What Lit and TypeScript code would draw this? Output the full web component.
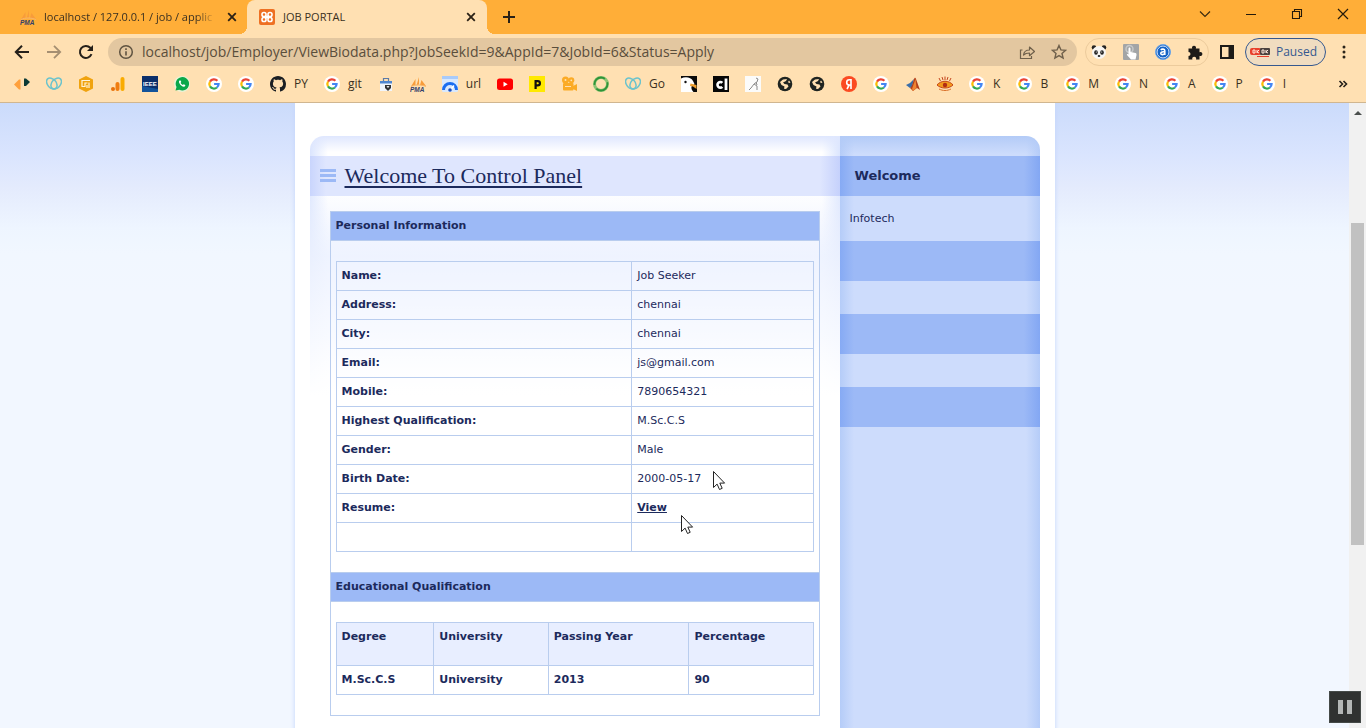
import { LitElement, html, css, svg, TemplateResult } from "lit";
import { customElement } from "lit/decorators.js";

type Glyph = TemplateResult;

const icon = (body: unknown, box = 16, size = 16): Glyph =>
  html`<svg width=${size} height=${size} viewBox="0 0 ${box} ${box}" fill="none" aria-hidden="true">${body}</svg>`;

const google = icon(svg`
  <circle cx="8" cy="8" r="8" fill="#fff"/>
  <g stroke-width="2.200">
    <path d="M4 5.600A4.600 4.600 0 0 1 11.400 4.800" stroke="#ea4335"/>
    <path d="M4 5.600A4.700 4.700 0 0 0 4 10.400" stroke="#fbbc05"/>
    <path d="M4 10.400A4.600 4.600 0 0 0 10.900 11.500" stroke="#34a853"/>
    <path d="M10.900 11.500A4.700 4.700 0 0 0 12.600 8H8.100" stroke="#4285f4"/>
  </g>`);

const pma = icon(svg`
  <path d="M1 10.500L5.500 3v6zM6.500 9.500L9 1v7.500zM10 9l1.500-5L16 10z" fill="#f89c3a"/>
  <path d="M1 10.500c4-2 10-2 15 0" stroke="#f7b56a"/>
  <text x="0" y="15.500" font-family="Liberation Sans" font-size="6.500" font-weight="bold" font-style="italic" fill="#33416b">PMA</text>`);

const godaddy = icon(svg`
  <g stroke="#6cc3cc" stroke-width="1.500">
    <ellipse cx="5.800" cy="7.500" rx="4.300" ry="6.300" transform="rotate(-42 5.800 7.500)"/>
    <ellipse cx="10.200" cy="7.500" rx="4.300" ry="6.300" transform="rotate(42 10.200 7.500)"/>
  </g>`);

const globe = icon(svg`
  <circle cx="8" cy="8" r="7.300" fill="#1f2421"/>
  <path d="M3 6l3-2.500 4-.5-1 2-3 1.500 1.500 1.500 3 .5 1 2-2.500 2.500-2-.3.500-2.200-3-1.500z" fill="#ffe0b2"/>
  <path d="M12 4.500l1.500 2-1.500.5-1-1z" fill="#ffe0b2"/>`);

const xampp = icon(svg`
  <rect width="16" height="16" rx="2" fill="#ee7023"/>
  <g stroke="#fff" stroke-width="1.600">
    <rect x="3" y="3.500" width="4" height="4" rx="1.800"/><rect x="9" y="3.500" width="4" height="4" rx="1.800"/>
    <rect x="3" y="8.500" width="4" height="4" rx="1.800"/><rect x="9" y="8.500" width="4" height="4" rx="1.800"/>
  </g>
  <path d="M6 6.500h4v3H6z" fill="#fff"/>`);

const glyphs: Record<string, Glyph> = {
  google, pma, godaddy, globe, xampp,
  diamonds: icon(svg`<path d="M0 8.500L5 3.500h1.500v10H5z" fill="#ffa03c"/><path d="M10 2.500h2L16 6l-4 4h-2z" fill="#0d3b36"/>`),
  hex: icon(svg`<path d="M8 0l7 3.500v9L8 16l-7-3.500v-9z" fill="#f0a30f"/><path d="M12 4.500H4v6h3v-3.500h2.500M9 12V9M11 12V6.500" stroke="#fff3d6" stroke-width="1.200"/>`),
  bars: icon(svg`<rect x="10.500" y="1" width="4" height="14" rx="2" fill="#f9ab00"/><rect x="5.500" y="6" width="4" height="9" rx="2" fill="#f07d10"/><circle cx="3" cy="13" r="2" fill="#e8710a"/>`),
  ieee: icon(svg`<rect width="16" height="16" fill="#0b2f6b"/><path d="M0 16V10l16 3v3z" fill="#12539b"/><text x="1" y="10" font-family="Liberation Sans" font-size="6" font-weight="bold" fill="#fff">IEEE</text>`),
  whatsapp: icon(svg`<circle cx="8" cy="8" r="8" fill="#e9f3d8"/><path d="M1.500 14.500l1-3.500A6.700 6.700 0 1 1 5.300 13.700z" fill="#0aa84a"/><path d="M5.500 4.500c-1.300 1 0 3.600 1.700 5 1.700 1.400 3.300 1.800 4 .5l.1-.9-1.600-.9-.9.800c-1-.4-1.900-1.300-2.200-2.200l.7-.8-.7-1.600z" fill="#fff"/>`),
  github: icon(svg`<path fill="#1b1f23" d="M8 0C3.580 0 0 3.580 0 8c0 3.540 2.290 6.530 5.470 7.590.4.070.55-.17.55-.38 0-.19-.01-.82-.01-1.490-2.010.37-2.530-.49-2.690-.94-.09-.23-.48-.94-.82-1.130-.28-.15-.68-.52-.01-.53.630-.01 1.080.58 1.230.82.720 1.210 1.870.87 2.330.66.070-.52.280-.87.510-1.070-1.780-.2-3.640-.89-3.640-3.950 0-.87.310-1.590.82-2.150-.08-.2-.36-1.020.08-2.120 0 0 .67-.21 2.200.82.640-.18 1.320-.27 2-.27s1.360.09 2 .27c1.530-1.040 2.200-.82 2.200-.82.440 1.100.16 1.920.08 2.120.510.56.820 1.270.82 2.150 0 3.070-1.870 3.750-3.650 3.950.29.250.54.730.54 1.480 0 1.070-.01 1.930-.01 2.200 0 .21.150.46.550.38A8 8 0 0 0 16 8c0-4.420-3.580-8-8-8z"/>`),
  box: icon(svg`<path d="M5.500 5V2.500h5V5" stroke="#5b7ba8" stroke-width="1.200"/><rect x="2" y="5" width="12" height="10" fill="#f1f5fb"/><path d="M2 5h12v2.500H2z" fill="#4f86cf"/><path d="M7 9h6v3l-3 3-3-3z" fill="#333"/><path d="M9 10l1 1.500L11 10" stroke="#fff"/>`),
  gauge: icon(svg`<rect width="16" height="16" rx="1.500" fill="#d8e8fd"/><path d="M0 0h16v3H0z" fill="#a9cbfa"/><path d="M1.500 14a6.500 6.500 0 0 1 13 0" stroke="#1a6df0" stroke-width="3"/><path d="M8 14.500l4-5" stroke="#fff" stroke-width="1.500"/><circle cx="8" cy="14" r="1.800" fill="#1a4fbf"/>`),
  youtube: icon(svg`<rect y="2.500" width="16" height="11.500" rx="2.500" fill="#f00"/><path d="M6.500 5.800v4.900L10.700 8.200z" fill="#fff"/>`),
  pbox: icon(svg`<rect width="16" height="16" fill="#ffe900"/><path d="M6.600 13V5.200h2.200a2.100 2.100 0 0 1 0 4.200H7" stroke="#111" stroke-width="2.200"/>`),
  camera: icon(svg`<g fill="#fbab26"><circle cx="4.500" cy="4" r="3.500"/><circle cx="10.300" cy="4.300" r="3"/><rect x="2" y="7" width="10.500" height="7.500" rx="1"/><path d="M12 10l4-2v7l-4-2z"/></g><g fill="#ffe0b2"><circle cx="4.500" cy="4" r="1"/><circle cx="10.300" cy="4.300" r=".9"/><path d="M4 10h6v1H4z"/></g>`),
  ring: icon(svg`<circle cx="8" cy="8" r="6.500" stroke="#8cc474" stroke-width="3"/><circle cx="8" cy="8" r="6.500" stroke="#2f9339" stroke-width="1.800" stroke-dasharray="15 4"/>`),
  bird: icon(svg`<rect width="16" height="16" fill="#0b0b0b"/><path d="M0 2.500C4 .5 10 1 12 5l1.500 3-3 2.500c-.5 2 .5 4 2 5.500H0z" fill="#fff"/><path d="M9.500 7.500l6 1.500v4L12 10.500 9 10z" fill="#f0a030"/><circle cx="4.500" cy="6" r="1.200" fill="#111"/>`),
  cl: icon(svg`<rect width="16" height="16" fill="#060606"/><path d="M9.300 6.900A2.800 2.800 0 1 0 9.300 10.800" stroke="#fff" stroke-width="2.600"/><path d="M13 2.500v11.500" stroke="#fff" stroke-width="2.800"/>`),
  figure: icon(svg`<rect width="16" height="16" fill="#fbfbfa"/><path d="M11 2l2 1-1 3-3 2 3 2v4M9 8l-3 4-2 2M11 6l1 3" stroke="#8a8a8a"/>`),
  yandex: icon(svg`<circle cx="8" cy="8" r="8" fill="#fb4a22"/><path d="M10 13V3.800H8.300a2.500 2.500 0 0 0 0 5.200H10M8.200 9l-2.200 4" stroke="#fff" stroke-width="1.600"/>`),
  matlab: icon(svg`<path d="M1 9l4-2 4-4-2 8-2 1z" fill="#3b6ea8"/><path d="M9 3c1-2 1.500-1.500 2 0l4 11-3-2-4 3-3-3C7 11 8 6 9 3z" fill="#b4401c"/><path d="M10.500 3l1 9L8 15l-1-2z" fill="#ef8532"/>`),
  eye: icon(svg`<g stroke="#c4451d"><path d="M2 2l1.500 3M5 1l1 3M8 .5V4M11 1l-1 3M14 2l-1.500 3"/></g><path d="M0 9c4-5 12-5 16 0-4 4-12 4-16 0z" fill="#f29b1d" stroke="#c4451d"/><circle cx="8" cy="9" r="2.200" fill="#b32e15"/><path d="M2 13c4 2 8 2 12 0" stroke="#d9702a"/>`),
  panda: icon(svg`<g fill="#222"><circle cx="3" cy="3.500" r="2.300"/><circle cx="13" cy="3.500" r="2.300"/></g><ellipse cx="8" cy="8.500" rx="7" ry="6.500" fill="#f7f5f2"/><g fill="#222"><ellipse cx="5" cy="8.500" rx="1.800" ry="2.200"/><ellipse cx="11" cy="8.500" rx="1.800" ry="2.200"/><ellipse cx="8" cy="12" rx="1.300" ry=".9"/></g><circle cx="5.300" cy="8" r=".6" fill="#fff"/><circle cx="10.700" cy="8" r=".6" fill="#fff"/>`),
  hand: icon(svg`<rect width="16" height="16" rx="1" fill="#a3a5a6"/><circle cx="6.500" cy="5" r="3.500" stroke="#c6c8c9" stroke-width="1.500"/><path d="M5.500 4.500c0-1.500 2-1.500 2 0V8l5 1c1 .3 1 1 1 2l-1 4.500H8L4 11c-.5-1 .5-1.500 1.500-.5z" fill="#fff"/>`),
  ablue: icon(svg`<circle cx="8" cy="8" r="7.500" fill="#1462c4" stroke="#6ba6e8"/><circle cx="8" cy="8" r="6" stroke="#dbeaff"/><path d="M5.800 6c1-1.300 4-1.200 4 .8V11M9.800 7.800c-2-.3-4 .2-4 1.500 0 2 3.500 1.500 4 0" stroke="#fff" stroke-width="1.600"/>`),
  puzzle: icon(svg`<path d="M1.500 4.500h3.700a2 2 0 1 1 3.600 0h3.700v3.700a2 2 0 1 1 0 3.600V15.500H9a2 2 0 1 0-3.600 0H1.500V12a2 2 0 1 0 0-4z" fill="#1d1b18"/>`),
  panel: icon(svg`<rect x="2" y="2" width="12" height="12" stroke="#1d1b18" stroke-width="2"/><path d="M9.500 2H14v12H9.500z" fill="#1d1b18"/>`),
  dots: icon(svg`<g fill="#2b241a"><circle cx="8" cy="3" r="1.500"/><circle cx="8" cy="8" r="1.500"/><circle cx="8" cy="13" r="1.500"/></g>`),
  back: icon(svg`<path d="M15 8H2.500M8 1.800L1.800 8 8 14.200" stroke="#25201a" stroke-width="2"/>`),
  forward: icon(svg`<path d="M1 8h12.500M8 1.800L14.200 8 8 14.200" stroke="#a58f72" stroke-width="1.800"/>`),
  reload: icon(svg`<path d="M13.500 10.200A6 6 0 1 1 12.300 3.800L14 5.500" stroke="#25201a" stroke-width="2"/><path d="M15 1v6H9z" fill="#25201a"/>`),
  info: icon(svg`<circle cx="8" cy="8" r="6.300" stroke="#5f5341" stroke-width="1.500"/><path d="M8 7.200v4.300M8 4.300V6" stroke="#5f5341" stroke-width="1.600"/>`),
  share: icon(svg`<path d="M3.500 6H1.500v8.500h11V12" stroke="#6f604b" stroke-width="1.200"/><path d="M4.500 11c.5-3.500 2.500-5 6-5V3l5 4.500-5 4.200V9c-2.500 0-4.500.5-6 2z" stroke="#6f604b" stroke-width="1.200" stroke-linejoin="round"/>`),
  star: icon(svg`<path d="M8 1.500l1.900 4.400 4.700.4-3.600 3.100 1.100 4.700L8 11.600l-4.100 2.500L5 9.400 1.400 6.300l4.700-.4z" stroke="#6f604b" stroke-width="1.400"/>`),
  close: icon(svg`<path d="M4.200 4.200l7.600 7.600M11.800 4.200l-7.600 7.600" stroke="#2a2116" stroke-width="1.800"/>`),
  plus: icon(svg`<path d="M8 2v12M2 8h12" stroke="#2a2116" stroke-width="2"/>`),
  chevron: icon(svg`<path d="M3 5.500l5 5 5-5" stroke="#3a2a10" stroke-width="1.200"/>`),
  min: icon(svg`<path d="M3 8.500h10" stroke="#241a0a"/>`),
  max: icon(svg`<path d="M3.500 5.500h7v7h-7zM5.500 5.500v-2h7v7h-2" stroke="#241a0a" stroke-width="1.100"/>`),
  exit: icon(svg`<path d="M3 3l10 10M13 3L3 13" stroke="#241a0a" stroke-width="1.200"/>`),
  more: icon(svg`<path d="M4.500 5l3 3-3 3M8.500 5l3 3-3 3" stroke="#25201a" stroke-width="1.600"/>`),
};

const bookmarks: Array<[string, string, string]> = [
  ["diamonds", "", "Design"], ["godaddy", "", "Domains"], ["hex", "", "Statistics"], ["bars", "", "Analytics"],
  ["ieee", "", "IEEE"], ["whatsapp", "", "WhatsApp"], ["google", "", "Google"], ["google", "", "Google"],
  ["github", "PY", ""], ["google", "git", ""], ["box", "", "Store"], ["pma", "", "phpMyAdmin"],
  ["gauge", "url", ""], ["youtube", "", "YouTube"], ["pbox", "", "P"], ["camera", "", "Camera"],
  ["ring", "", "Ring"], ["godaddy", "Go", ""], ["bird", "", "Bird"], ["cl", "", "cl"], ["figure", "", "Figure"],
  ["globe", "", "Globe"], ["globe", "", "Globe"], ["yandex", "", "Yandex"], ["google", "", "Google"],
  ["matlab", "", "MATLAB"], ["eye", "", "Eye"], ["google", "K", ""], ["google", "B", ""], ["google", "M", ""],
  ["google", "N", ""], ["google", "A", ""], ["google", "P", ""], ["google", "I", ""],
];

@customElement("browser-chrome")
export class BrowserChrome extends LitElement {
  static styles = css`
    :host { display: block; font: 12px/16px "Open Sans", sans-serif; color: #3a3021; background: #ffe0b2; border-bottom: 1px solid #d0b690; }
    svg { display: block; flex: none; }
    button { border: 0; padding: 0; margin: 0; background: none; font: inherit; color: inherit; display: flex; align-items: center; }
    .strip { display: flex; align-items: center; height: 34px; background: #ffae38; }
    .tab { box-sizing: border-box; height: 34px; display: flex; align-items: center; gap: 8px; flex: 0 1 240px; min-width: 0; padding: 0 8px 0 12px; }
    .first { flex-basis: 247px; padding: 0 7px 0 20px; }
    .active { position: relative; background: #ffe0b2; border-radius: 8px 8px 0 0; }
    .active::before, .active::after { content: ""; position: absolute; bottom: 0; width: 8px; height: 8px; }
    .active::before { right: 100%; background: radial-gradient(circle at 0 0, transparent 8px, #ffe0b2 8px); }
    .active::after { left: 100%; background: radial-gradient(circle at 100% 0, transparent 8px, #ffe0b2 8px); }
    .title { flex: 1; min-width: 0; white-space: nowrap; font-size: 11px; }
    .fade { -webkit-mask-image: linear-gradient(to left, transparent, #000 20px); mask-image: linear-gradient(to left, transparent, #000 20px); }
    .new { margin: 0 auto 0 14px; }
    .window { display: flex; gap: 30px; padding-right: 15px; align-self: flex-start; padding-top: 6px; }
    .bar { display: flex; align-items: center; height: 28px; padding: 4px 15px 0 14px; }
    .nav { display: flex; gap: 16px; }
    .omni { flex: 1; min-width: 0; height: 28px; margin-left: 14px; padding: 0 10px; border-radius: 14px; background: #e3c7a0; display: flex; align-items: center; gap: 8px; }
    .url { flex: 1; min-width: 0; border: 0; padding: 0; background: none; outline: 0; font: 14px/20px "Open Sans", sans-serif; color: #5a4e3c; }
    .tools { display: flex; gap: 16px; }
    .ext { box-sizing: border-box; display: flex; align-items: center; gap: 16px; height: 28px; margin-left: 8px; padding: 0 5px; border: 1px solid #eccb9c; border-radius: 14px; }
    .side { margin: 0 10px; }
    .paused { box-sizing: border-box; height: 28px; padding: 0 8px 0 4px; gap: 6px; border: 1px solid #35588f; border-radius: 14px; background: #f0dcc0; color: #35588f; }
    .menu { margin: 0 -1px 0 10px; }
    .marks { display: flex; align-items: center; gap: 16px; height: 36px; padding: 0 15px 0 14px; }
    .mark { display: flex; align-items: center; gap: 8px; color: inherit; text-decoration: none; }
    .more { margin-left: auto; }
  `;

  private ib(name: string, label: string, cls = "") {
    return html`<button class=${cls} aria-label=${label}>${glyphs[name]}</button>`;
  }

  render() {
    return html`
      <div class="strip">
        <div class="tab first">${glyphs.pma}<span class="title fade">localhost / 127.0.0.1 / job / applic</span>${this.ib("close", "Close tab")}</div>
        <div class="tab active">${glyphs.xampp}<span class="title">JOB PORTAL</span>${this.ib("close", "Close tab")}</div>
        ${this.ib("plus", "New tab", "new")}
        <div class="window">${this.ib("chevron", "Search tabs")}${this.ib("min", "Minimize")}${this.ib("max", "Restore")}${this.ib("exit", "Close")}</div>
      </div>
      <div class="bar">
        <div class="nav">${this.ib("back", "Back")}${this.ib("forward", "Forward")}${this.ib("reload", "Reload")}</div>
        <div class="omni">
          ${glyphs.info}
          <input class="url" type="text" aria-label="Address" .value=${"localhost/job/Employer/ViewBiodata.php?JobSeekId=9&AppId=7&JobId=6&Status=Apply"}>
          <div class="tools">${this.ib("share", "Share")}${this.ib("star", "Bookmark")}</div>
        </div>
        <div class="ext">${this.ib("panda", "Panda")}${this.ib("hand", "Touch")}${this.ib("ablue", "Assistant")}${this.ib("puzzle", "Extensions")}</div>
        ${this.ib("panel", "Side panel", "side")}
        <button class="paused">
          <svg width="20" height="10" viewBox="0 0 20 10" aria-hidden="true"><rect width="11" height="7" y="1" rx="2" fill="#e8402c"/><rect x="10" y="1" width="10" height="7" rx="1" fill="#4a4240"/><path d="M3 3h2v3H3zM7 3v3M9 3L7 5l2 1M12 3h2v3h-2zM16 3v3M18 3l-2 2 2 1" stroke="#ffe9dc" fill="none"/><path d="M7 9.500h12" stroke="#e8402c"/></svg>
          Paused</button>
        ${this.ib("dots", "Menu", "menu")}
      </div>
      <nav class="marks">
        ${bookmarks.map(([g, text, label]) => html`<a class="mark" href="#" aria-label=${text || label}>${glyphs[g]}${text ? html`<span>${text}</span>` : ""}</a>`)}
        ${this.ib("more", "More bookmarks", "more")}
      </nav>`;
  }
}

const details: Array<[string, string]> = [
  ["Name:", "Job Seeker"], ["Address:", "chennai"], ["City:", "chennai"], ["Email:", "js@gmail.com"],
  ["Mobile:", "7890654321"], ["Highest Qualification:", "M.Sc.C.S"], ["Gender:", "Male"],
  ["Birth Date:", "2000-05-17"], ["Resume:", "View"], ["", ""],
];

@customElement("biodata-page")
export class BiodataPage extends LitElement {
  static styles = css`
    :host { display: flex; flex-direction: column; align-items: center; min-height: 100%; font: 11px/18px Verdana, "DejaVu Sans", sans-serif; color: #1c2a5c;
      background: linear-gradient(#cbdbfb 0, #d9e4fe 50px, #e4ebfd 85px, #eef5ff 125px, #f1f7ff 150px, #f2f7ff 190px) #f2f7ff; }
    .page { box-sizing: border-box; flex: 1; width: 100%; max-width: 760px; padding: 33px 15px 0; display: flex; background: #fff; box-shadow: 0 0 5px #c3d6fb; }
    .shell { flex: 1; display: grid; grid-template-columns: minmax(0, 1fr) 200px; }
    .main { padding: 20px 0 40px; border-radius: 14px 0 0 0;
      background:
        linear-gradient(#dfe7fe, transparent 16px),
        linear-gradient(transparent 20px, #fff 260px),
        linear-gradient(to right, #dbe5fe, transparent 18px),
        linear-gradient(to left, #dbe5fe, transparent 18px),
        linear-gradient(#fff 55px, #e3ebff 120px, #e3ebff 200px, #fff 290px); }
    .title { display: flex; align-items: center; gap: 9px; height: 40px; padding: 0 10px;
      background: linear-gradient(to right, #c9d5fd, #dfe6fe 16px, #dfe6fe calc(100% - 20px), #c5d1fc); }
    h1 { margin: 0; font: 22px/28px Georgia, "Liberation Serif", serif; text-decoration: underline; text-decoration-thickness: 2px; text-underline-offset: 3px; }
    .card { margin: 15px 20px 0; border: 1px solid #b9cdee; }
    h2 { margin: 0; padding: 0 5px; font: bold 11px/28px Verdana, "DejaVu Sans", sans-serif; background: #9cb9f6; border-bottom: 1px solid #b9cdee; }
    .body ~ h2 { border-top: 1px solid #b9cdee; }
    .body { padding: 20px 5px; }
    table { width: 100%; border-collapse: collapse; table-layout: fixed; }
    th, td { box-sizing: border-box; height: 29px; padding: 5px; border: 1px solid #b9cdee; text-align: left; vertical-align: top; }
    .label { width: 62%; }
    .head th { height: 43px; background: #e8eeff; }
    .strong { font-weight: bold; }
    .view { color: inherit; font-weight: bold; }
    .degree { width: 20.5%; } .uni { width: 24%; } .year { width: 29.5%; }
    .side { border-radius: 0 14px 0 0; overflow: hidden; padding-top: 20px;
      background: linear-gradient(#b3cbf7, transparent 18px), linear-gradient(to right, #b5ccf8, transparent 14px), linear-gradient(to left, #b5ccf8, transparent 14px), #cddcfc; }
    .side h3 { box-sizing: border-box; margin: 0; height: 40px; padding: 0 15px; font: bold 13px/40px Verdana, "DejaVu Sans", sans-serif;
      background: linear-gradient(to right, #86aaf4, #9cb9f6 14px, #9cb9f6 calc(100% - 16px), #83a7f3); }
    .side p { margin: 0; padding: 14px 10px 13px; }
    .side .blank { height: 33px; padding: 0; }
  `;

  render() {
    return html`
      <div class="page"><div class="shell">
        <main class="main">
          <div class="title">
            <svg width="16" height="14" viewBox="0 0 16 14" aria-hidden="true"><path d="M0 0h16v3H0zM0 5h16v3H0zM0 10h16v3H0z" fill="#9cb9f6"/></svg>
            <h1>Welcome To Control Panel</h1>
          </div>
          <div class="card">
            <h2>Personal Information</h2>
            <div class="body"><table>
              ${details.map(([k, v]) => html`<tr><th class="label" scope="row">${k}</th><td>${v === "View" ? html`<a class="view" href="#">View</a>` : v}</td></tr>`)}
            </table></div>
            <h2>Educational Qualification</h2>
            <div class="body"><table>
              <tr class="head"><th class="degree">Degree</th><th class="uni">University</th><th class="year">Passing Year</th><th>Percentage</th></tr>
              <tr class="strong"><td>M.Sc.C.S</td><td>University</td><td>2013</td><td>90</td></tr>
            </table></div>
          </div>
        </main>
        <aside class="side">
          <h3>Welcome</h3><p>Infotech</p>
          <h3></h3><p class="blank"></p>
          <h3></h3><p class="blank"></p>
          <h3></h3>
        </aside>
      </div></div>`;
  }
}

@customElement("app-root")
export class AppRoot extends LitElement {
  static styles = css`
    :host { display: flex; flex-direction: column; height: 100vh; overflow: hidden; position: relative; }
    .view { flex: 1; min-height: 0; display: flex; }
    .doc { flex: 1; min-width: 0; overflow: hidden; }
    .scroll { box-sizing: border-box; width: 17px; background: #f1f1f1; padding: 7px 2px 0; display: flex; flex-direction: column; align-items: center; }
    .thumb { width: 13px; height: 322px; margin-top: 108px; background: #c1c1c1; }
    .pause { position: absolute; right: 5px; bottom: 5px; width: 32px; height: 32px; padding: 0; border: 1px solid #454a48; background: #303231; display: grid; place-items: center; }
    .cursor { position: absolute; left: 712px; top: 470px; }
    .ghost { left: 680px; top: 514px; }
  `;

  private cursor(cls: string) {
    return html`<svg class=${cls} width="14" height="21" viewBox="0 0 14 21" aria-hidden="true"><path d="M1.500 1.500v16l3.600-3.400 2.400 5.400 2.700-1.200-2.400-5.200h4.800z" fill="#fff" stroke="#222"/></svg>`;
  }

  render() {
    return html`
      <browser-chrome></browser-chrome>
      <div class="view">
        <div class="doc"><biodata-page></biodata-page></div>
        <div class="scroll">
          <svg width="8" height="5" viewBox="0 0 8 5" aria-hidden="true"><path d="M0 5l4-4 4 4z" fill="#4b4f4d"/></svg>
          <div class="thumb"></div>
        </div>
      </div>
      ${this.cursor("cursor")}${this.cursor("cursor ghost")}
      <button class="pause" aria-label="Pause"><svg width="14" height="14" viewBox="0 0 14 14" aria-hidden="true"><path d="M0 0h5v14H0zM9 0h5v14H9z" fill="#b4b7b6"/></svg></button>`;
  }
}
